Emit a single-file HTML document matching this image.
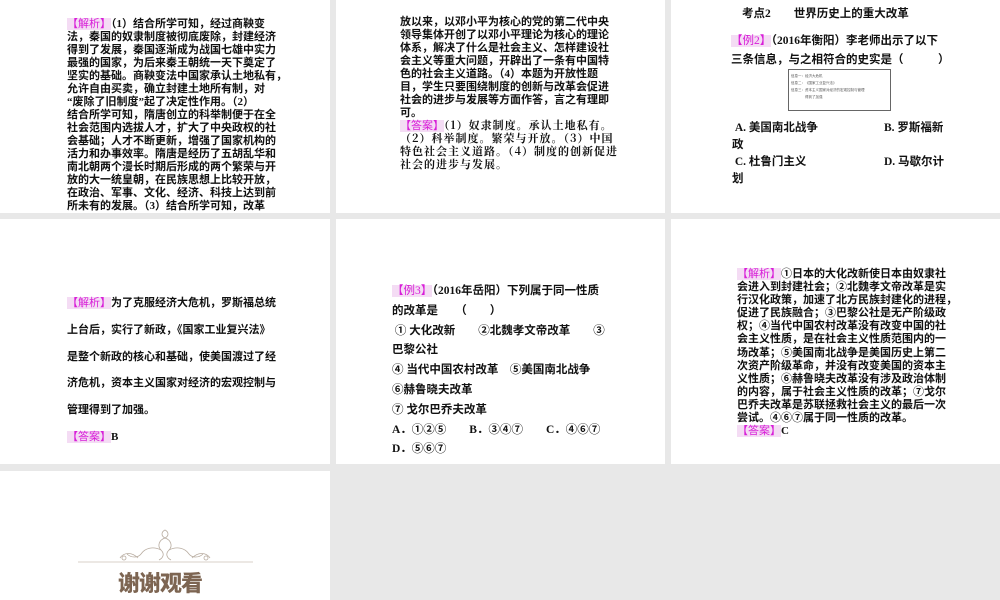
<!DOCTYPE html>
<html><head><meta charset="utf-8"><style>
*{margin:0;padding:0}
body{width:1000px;height:600px;background:#e8e8e8;position:relative;overflow:hidden;font-family:"Liberation Serif","Noto Sans CJK SC",sans-serif;color:#111}
.s{position:absolute;background:#fff;overflow:hidden}
.l{position:absolute;white-space:nowrap;font-size:11px;line-height:13px;font-weight:bold}
.l span{line-height:1}
.m{color:#d81ed8;background:#f4dcf4;font-weight:normal}
.k{font-family:"Noto Serif CJK SC","Liberation Serif",serif;letter-spacing:1px}
</style></head><body>
<div class="s" style="left:0;top:0;width:330px;height:213px"></div>
<div class="s" style="left:336px;top:0;width:329px;height:213px"></div>
<div class="s" style="left:671px;top:0;width:329px;height:213px"></div>
<div class="s" style="left:0;top:219px;width:330px;height:245px"></div>
<div class="s" style="left:336px;top:219px;width:329px;height:245px"></div>
<div class="s" style="left:671px;top:219px;width:329px;height:245px"></div>
<div class="s" style="left:0;top:471px;width:330px;height:129px"></div>

<!-- slide 1 -->
<div class="l" style="left:67px;top:18px">
<span class="m">【解析】</span>（1）结合所学可知，经过商鞅变<br>法，秦国的奴隶制度被彻底废除，封建经济<br>得到了发展，秦国逐渐成为战国七雄中实力<br>最强的国家，为后来秦王朝统一天下奠定了<br>坚实的基础。商鞅变法中国家承认土地私有，<br>允许自由买卖，确立封建土地所有制，对<br>“废除了旧制度”起了决定性作用。（2）<br>结合所学可知，隋唐创立的科举制便于在全<br>社会范围内选拔人才，扩大了中央政权的社<br>会基础；人才不断更新，增强了国家机构的<br>活力和办事效率。隋唐是经历了五胡乱华和<br>南北朝两个漫长时期后形成的两个繁荣与开<br>放的大一统皇朝，在民族思想上比较开放，<br>在政治、军事、文化、经济、科技上达到前<br>所未有的发展。（3）结合所学可知，改革</div>

<!-- slide 2 -->
<div class="l" style="left:400px;top:16px">
放以来，以邓小平为核心的党的第二代中央<br>领导集体开创了以邓小平理论为核心的理论<br>体系，解决了什么是社会主义、怎样建设社<br>会主义等重大问题，开辟出了一条有中国特<br>色的社会主义道路。（4）本题为开放性题<br>目，学生只要围绕制度的创新与改革会促进<br>社会的进步与发展等方面作答，言之有理即<br>可。<br><span class="m">【答案】</span><span class="k">（1）奴隶制度。承认土地私有。</span><br><span class="k">（2）科举制度。繁荣与开放。（3）中国</span><br><span class="k">特色社会主义道路。（4）制度的创新促进</span><br><span class="k">社会的进步与发展。</span></div>

<!-- slide 3 -->
<div class="l" style="left:742px;top:7px;font-size:11.5px;line-height:14px">考点2　　世界历史上的重大改革</div>
<div class="l" style="left:731px;top:32px;font-size:11.5px;line-height:19px"><span class="m">【例2】</span>（2016年衡阳）李老师出示了以下<br>三条信息，与之相符合的史实是（　　　）</div>
<div style="position:absolute;left:788px;top:69px;width:103px;height:42px;border:1px solid #666;font-size:3.5px;line-height:7px;color:#555;padding:3px 2px;box-sizing:border-box;white-space:nowrap">信息一：经济大危机<br>信息二：《国家工业复兴法》<br>信息三：资本主义国家对经济的宏观控制与管理<br>　　　　得到了加强</div>
<div class="l" style="left:732px;top:120px;font-size:11.5px;line-height:17px">&nbsp;A. 美国南北战争<br>政<br>&nbsp;C. 杜鲁门主义<br>划</div>
<div class="l" style="left:884px;top:120px;font-size:11.5px;line-height:17px">B. 罗斯福新<br><br>D. 马歇尔计</div>

<!-- row2 slide1 -->
<div class="l" style="left:67px;top:290px;line-height:26.8px">
<span class="m">【解析】</span>为了克服经济大危机，罗斯福总统<br>上台后，实行了新政，《国家工业复兴法》<br>是整个新政的核心和基础，使美国渡过了经<br>济危机，资本主义国家对经济的宏观控制与<br>管理得到了加强。<br><span class="m">【答案】</span>B</div>

<!-- row2 slide2 -->
<div class="l" style="left:392px;top:282px;font-size:11.5px;line-height:19.8px">
<span class="m">【例3】</span>（2016年岳阳）下列属于同一性质<br>的改革是　　（　　）<br>&nbsp;① 大化改新　　②北魏孝文帝改革　　③<br>巴黎公社<br>④ 当代中国农村改革　⑤美国南北战争<br>⑥赫鲁晓夫改革<br>⑦ 戈尔巴乔夫改革<br>A．①②⑤　　B．③④⑦　　C．④⑥⑦<br>D．⑤⑥⑦</div>

<!-- row2 slide3 -->
<div class="l" style="left:737px;top:268px;line-height:13.1px">
<span class="m">【解析】</span>①日本的大化改新使日本由奴隶社<br>会进入到封建社会；②北魏孝文帝改革是实<br>行汉化政策，加速了北方民族封建化的进程，<br>促进了民族融合；③巴黎公社是无产阶级政<br>权；④当代中国农村改革没有改变中国的社<br>会主义性质，是在社会主义性质范围内的一<br>场改革；⑤美国南北战争是美国历史上第二<br>次资产阶级革命，并没有改变美国的资本主<br>义性质；⑥赫鲁晓夫改革没有涉及政治体制<br>的内容，属于社会主义性质的改革；⑦戈尔<br>巴乔夫改革是苏联拯救社会主义的最后一次<br>尝试。④⑥⑦属于同一性质的改革。<br><span class="m">【答案】</span>C</div>

<!-- thanks -->
<svg style="position:absolute;left:78px;top:528px" width="175" height="36" viewBox="0 0 175 36">
<g fill="none" stroke="#b8aca0" stroke-width="0.8">
<path d="M87 2c-4 2-4 6 0 8 4-2 4-6 0-8z"/>
<path d="M87 10c-6 2-8 8-4 12s2 8-2 10M87 10c6 2 8 8 4 12s-2 8 2 10"/>
<path d="M83 22c-8-4-16-2-20 4-3 4-10 4-14 0M91 22c8-4 16-2 20 4 3 4 10 4 14 0"/>
<path d="M60 30c-6-6-14-6-18 0M114 30c6-6 14-6 18 0"/>
<circle cx="46" cy="30" r="2"/><circle cx="128" cy="30" r="2"/>
</g>
<line x1="0" y1="34" x2="175" y2="34" stroke="#d8d0c8" stroke-width="1"/>
</svg>
<div style="position:absolute;left:118px;top:568px;font-family:'Noto Sans CJK SC',sans-serif;font-weight:900;font-size:22px;line-height:28px;color:#7d6552;letter-spacing:-1px">谢谢观看</div>
</body></html>
